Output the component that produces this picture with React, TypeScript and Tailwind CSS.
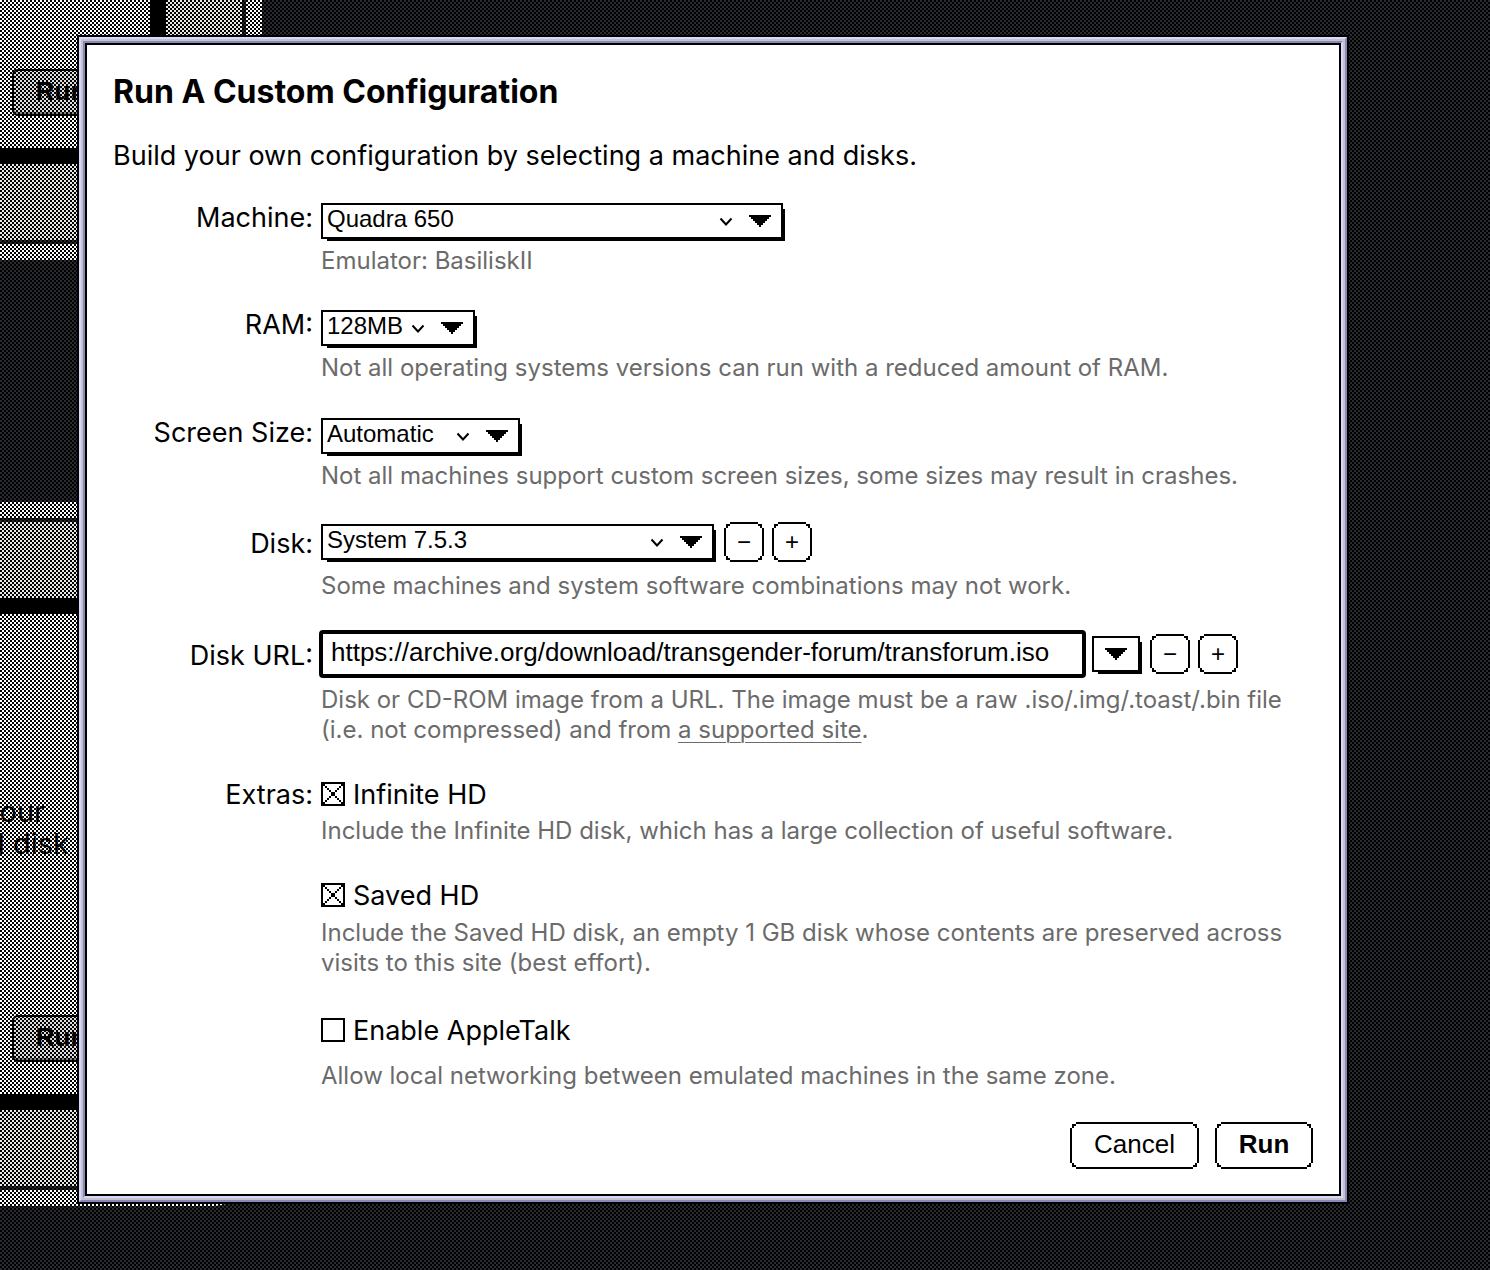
import React from 'react';

// Staircase arrow, drawn in 2px rows
const Arrow = ({ className = '' }: { className?: string }) => (
  <svg width="22" height="12" viewBox="0 0 22 12" shapeRendering="crispEdges" aria-hidden="true" className={className}>
    <path d="M0 0h22v2H0zM2 2h18v2H2zM4 4h14v2H4zM6 6h10v2H6zM8 8h6v2H8zM10 10h2v2h-2z" />
  </svg>
);

const Chevron = ({ className = '' }: { className?: string }) => (
  <svg width="14" height="10" viewBox="0 0 14 10" fill="none" stroke="black" strokeWidth="2" aria-hidden="true" className={className}>
    <path d="M1.500 1.500 7 7.500l5.500-6" />
  </svg>
);

const Select = ({ id, width, options }: { id: string; width: string; options: string[] }) => (
  <div className={`relative h-9 ${width}`}>
    <select
      id={id}
      className="block h-9 w-full appearance-none border-2 border-black bg-white pb-1 pl-1 pr-12 text-2xl/7 text-black shadow-[4px_4px_0_-2px_#000] outline-none"
    >
      {options.map((option) => (
        <option key={option}>{option}</option>
      ))}
    </select>
    <Chevron className="pointer-events-none absolute right-[50px] top-[14px]" />
    <Arrow className="pointer-events-none absolute right-3 top-3" />
  </div>
);

// Black stepped outline with a white stepped fill on top of it
const Button = ({ className = '', children, ...props }: React.ButtonHTMLAttributes<HTMLButtonElement>) => (
  <button
    type="button"
    className={`relative isolate bg-black text-black [clip-path:polygon(6px_0,calc(100%-6px)_0,calc(100%-6px)_2px,calc(100%-2px)_2px,calc(100%-2px)_6px,100%_6px,100%_calc(100%-6px),calc(100%-2px)_calc(100%-6px),calc(100%-2px)_calc(100%-2px),calc(100%-6px)_calc(100%-2px),calc(100%-6px)_100%,6px_100%,6px_calc(100%-2px),2px_calc(100%-2px),2px_calc(100%-6px),0_calc(100%-6px),0_6px,2px_6px,2px_2px,6px_2px)] before:absolute before:inset-[2px] before:-z-10 before:bg-white before:[clip-path:polygon(4px_0,calc(100%-4px)_0,calc(100%-4px)_2px,calc(100%-2px)_2px,calc(100%-2px)_4px,100%_4px,100%_calc(100%-4px),calc(100%-2px)_calc(100%-4px),calc(100%-2px)_calc(100%-2px),calc(100%-4px)_calc(100%-2px),calc(100%-4px)_100%,4px_100%,4px_calc(100%-2px),2px_calc(100%-2px),2px_calc(100%-4px),0_calc(100%-4px),0_4px,2px_4px,2px_2px,4px_2px)] ${className}`}
    {...props}
  >
    {children}
  </button>
);

const AddRemove = ({ label }: { label: string }) => (
  <div className="flex gap-2">
    <Button aria-label={`Remove ${label}`} className="size-10 text-2xl/9">−</Button>
    <Button aria-label={`Add ${label}`} className="size-10 text-2xl/9">+</Button>
  </div>
);

const Row = ({ label, htmlFor, className = '', children }: { label: string; htmlFor?: string; className?: string; children: React.ReactNode }) => (
  <div className={`grid grid-cols-[200px_minmax(0,1fr)] gap-x-2 ${className}`}>
    {htmlFor ? (
      <label htmlFor={htmlFor} className="whitespace-nowrap text-right font-['Inter',sans-serif] text-[27px]/[30px]">{label}</label>
    ) : (
      <span className="whitespace-nowrap text-right font-['Inter',sans-serif] text-[27px]/9">{label}</span>
    )}
    <div>{children}</div>
  </div>
);

const Hint = ({ className = 'mt-[7px]', children }: { className?: string; children: React.ReactNode }) => (
  <p className={`font-['Inter',sans-serif] text-2xl/[30px] text-[#6b6b6b] ${className}`}>{children}</p>
);

const Checkbox = ({ label, defaultChecked = false }: { label: string; defaultChecked?: boolean }) => (
  <label className="flex h-9 w-fit items-center gap-2 font-['Inter',sans-serif] text-[27px]/9">
    <span className="relative mb-[2px] size-6">
      <input type="checkbox" defaultChecked={defaultChecked} className="peer block size-6 appearance-none border-2 border-black bg-white" />
      <svg
        viewBox="0 0 20 20"
        shapeRendering="crispEdges"
        aria-hidden="true"
        className="pointer-events-none absolute left-[2px] top-[2px] hidden size-5 peer-checked:block"
      >
        {[0, 2, 4, 6, 8, 10, 12, 14, 16, 18].map((n) => (
          <g key={n}>
            <rect x={n} y={n} width="2" height="2" />
            <rect x={18 - n} y={n} width="2" height="2" />
          </g>
        ))}
      </svg>
    </span>
    {label}
  </label>
);

const Bezel = ({ className, children }: { className: string; children: React.ReactNode }) => (
  <div className={`absolute w-[662px] border-[16px] border-white bg-white ${className}`}>
    <div className="h-full border-4 border-[#26272c] bg-[#e8e8e4] p-[76px]">
      <div className="relative h-full border-[16px] border-black bg-white">{children}</div>
    </div>
  </div>
);

const GhostRun = ({ className }: { className: string }) => (
  <div className={`absolute h-[47px] w-[98px] rounded-md border-2 border-black bg-[#ddd] text-center text-[26px]/10 font-bold shadow-[inset_0_-2px_0_#888] ${className}`}>
    Run
  </div>
);

const Desktop = () => (
  <div className="absolute inset-0 overflow-hidden bg-[#2a2b30]" aria-hidden="true">
    <Bezel className="left-[-400px] top-[-500px] h-[760px]">
      <GhostRun className="bottom-8 right-10" />
    </Bezel>
    <Bezel className="left-[-400px] top-[502px] h-[704px] rounded-br-[50px]">
      <p className="absolute right-[81px] top-[182px] text-right font-['Inter',sans-serif] text-[29px]/8">
        <span className="mr-6">our</span>
        <br />
        and disk
      </p>
      <GhostRun className="bottom-8 right-10" />
    </Bezel>
    <div className="absolute inset-0 bg-[length:4px_4px] bg-[image:repeating-conic-gradient(#000_0_25%,transparent_0_50%)]" />
  </div>
);

export default function App() {
  return (
    <div className="relative min-h-screen pb-[65px] pl-[77px] pr-[141px] pt-[35px] font-['Liberation_Sans',Arial,sans-serif] text-black">
      <Desktop />
      <div role="dialog" aria-labelledby="dialog-title" className="relative border-2 border-black">
        <div className="border-2 border-b-[#8888bb] border-l-[#d8d8ff] border-r-[#8888bb] border-t-[#d8d8ff]">
          <div className="border-2 border-[#c4c4c8]">
            <div className="border-2 border-b-[#d8d8ff] border-l-[#8888bb] border-r-[#d8d8ff] border-t-[#8888bb]">
              <form className="border-2 border-black bg-white px-[26px] pb-[25px] pt-[27px]" onSubmit={(e) => e.preventDefault()}>
                <h1 id="dialog-title" className="font-['Inter',sans-serif] text-[32px]/10 font-bold">Run A Custom Configuration</h1>
                <p className="mt-6 font-['Inter',sans-serif] text-[27px]/10">Build your own configuration by selecting a machine and disks.</p>

                <Row label="Machine:" htmlFor="machine" className="mt-[27px]">
                  <Select id="machine" width="w-[462px]" options={['Quadra 650', 'Macintosh Plus', 'Power Macintosh 9500']} />
                  <Hint>Emulator: BasiliskII</Hint>
                </Row>
                <Row label="RAM:" htmlFor="ram" className="mt-[34px]">
                  <Select id="ram" width="w-[154px]" options={['128MB', '64MB', '32MB']} />
                  <Hint>Not all operating systems versions can run with a reduced amount of RAM.</Hint>
                </Row>
                <Row label="Screen Size:" htmlFor="screen" className="mt-[35px]">
                  <Select id="screen" width="w-[199px]" options={['Automatic', '640 × 480', '800 × 600']} />
                  <Hint>Not all machines support custom screen sizes, some sizes may result in crashes.</Hint>
                </Row>
                <Row label="Disk:" htmlFor="disk" className="mt-[31px] [&>label]:pt-[7px]">
                  <div className="flex items-center gap-[10px]">
                    <Select id="disk" width="w-[393px]" options={['System 7.5.3', 'System 7.1', 'Mac OS 8.1']} />
                    <AddRemove label="disk" />
                  </div>
                  <Hint className="mt-[9px]">Some machines and system software combinations may not work.</Hint>
                </Row>
                <Row label="Disk URL:" htmlFor="disk-url" className="mt-[29px] [&>label]:pt-[11px]">
                  <div className="-ml-[2px] flex items-center">
                    <input
                      id="disk-url"
                      type="text"
                      defaultValue="https://archive.org/download/transgender-forum/transforum.iso"
                      className="h-12 w-[767px] rounded-[4px] border-4 border-black bg-white pb-1 pl-2 text-[26px]/9 outline-none"
                    />
                    <button
                      type="button"
                      aria-label="Choose a disk URL"
                      className="ml-[6px] mr-[10px] flex h-9 w-12 items-center justify-center border-2 border-black bg-white shadow-[4px_4px_0_-2px_#000]"
                    >
                      <Arrow />
                    </button>
                    <AddRemove label="disk URL" />
                  </div>
                  <Hint>
                    Disk or CD-ROM image from a URL. The image must be a raw .iso/.img/.toast/.bin file (i.e. not compressed) and from{' '}
                    <a href="#sites" className="underline decoration-1 underline-offset-4">a supported site</a>.
                  </Hint>
                </Row>
                <Row label="Extras:" className="mt-8">
                  <Checkbox label="Infinite HD" defaultChecked />
                  <Hint className="mt-[3px]">Include the Infinite HD disk, which has a large collection of useful software.</Hint>
                  <div className="mt-8">
                    <Checkbox label="Saved HD" defaultChecked />
                    <Hint className="mt-1">Include the Saved HD disk, an empty 1 GB disk whose contents are preserved across visits to this site (best effort).</Hint>
                  </div>
                  <div className="mt-[35px]">
                    <Checkbox label="Enable AppleTalk" />
                    <Hint className="mt-3">Allow local networking between emulated machines in the same zone.</Hint>
                  </div>
                </Row>

                <div className="mt-[31px] flex justify-end gap-4">
                  <Button className="h-[47px] w-[129px] pb-1 text-[26px]/10">Cancel</Button>
                  <Button type="submit" className="h-[47px] w-[98px] pb-1 text-[26px]/10 font-bold">Run</Button>
                </div>
              </form>
            </div>
          </div>
        </div>
      </div>
    </div>
  );
}
